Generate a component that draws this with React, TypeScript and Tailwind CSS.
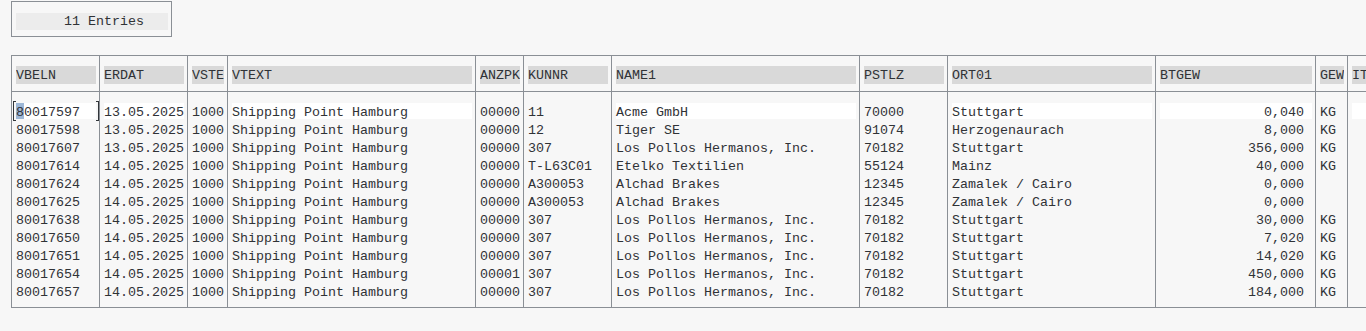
import React from "react";

type Col = { label: string; width: number; white?: boolean; right?: boolean };

const COLS: Col[] = [
  { label: "VBELN", width: 88, white: true },
  { label: "ERDAT", width: 88, white: true },
  { label: "VSTE", width: 40 },
  { label: "VTEXT", width: 248, white: true },
  { label: "ANZPK", width: 48 },
  { label: "KUNNR", width: 88 },
  { label: "NAME1", width: 248, white: true },
  { label: "PSTLZ", width: 88 },
  { label: "ORT01", width: 208, white: true },
  { label: "BTGEW", width: 160, white: true, right: true },
  { label: "GEW", width: 32 },
  { label: "IT", width: 200, white: true },
];

const LPH = "Los Pollos Hermanos, Inc.";
const SPH = "Shipping Point Hamburg";

const ROWS: string[][] = [
  ["80017597", "13.05.2025", "1000", SPH, "00000", "11", "Acme GmbH", "70000", "Stuttgart", "0,040", "KG", ""],
  ["80017598", "13.05.2025", "1000", SPH, "00000", "12", "Tiger SE", "91074", "Herzogenaurach", "8,000", "KG", ""],
  ["80017607", "13.05.2025", "1000", SPH, "00000", "307", LPH, "70182", "Stuttgart", "356,000", "KG", ""],
  ["80017614", "14.05.2025", "1000", SPH, "00000", "T-L63C01", "Etelko Textilien", "55124", "Mainz", "40,000", "KG", ""],
  ["80017624", "14.05.2025", "1000", SPH, "00000", "A300053", "Alchad Brakes", "12345", "Zamalek / Cairo", "0,000", "", ""],
  ["80017625", "14.05.2025", "1000", SPH, "00000", "A300053", "Alchad Brakes", "12345", "Zamalek / Cairo", "0,000", "", ""],
  ["80017638", "14.05.2025", "1000", SPH, "00000", "307", LPH, "70182", "Stuttgart", "30,000", "KG", ""],
  ["80017650", "14.05.2025", "1000", SPH, "00000", "307", LPH, "70182", "Stuttgart", "7,020", "KG", ""],
  ["80017651", "14.05.2025", "1000", SPH, "00000", "307", LPH, "70182", "Stuttgart", "14,020", "KG", ""],
  ["80017654", "14.05.2025", "1000", SPH, "00001", "307", LPH, "70182", "Stuttgart", "450,000", "KG", ""],
  ["80017657", "14.05.2025", "1000", SPH, "00000", "307", LPH, "70182", "Stuttgart", "184,000", "KG", ""],
];

function FirstCell({ text }: { text: string }) {
  // focused cell: bracket corners + highlighted first char
  return (
    <div className="relative h-[18px] pt-[1px]">
      <span className="absolute left-[-3px] top-[-1px] h-[20px] w-[3px] border-l border-t border-b border-[#32363a]" />
      <span className="absolute right-[0px] top-[-1px] h-[20px] w-[3px] border-r border-t border-b border-[#32363a]" />
      <div className="h-[16px] w-[80px] bg-white leading-[19px] whitespace-pre">
        <span className="bg-[#9db7d6] leading-[16px] inline-block h-[16px] align-top pt-[1.5px]">{text[0]}</span>
        {text.slice(1)}
      </div>
    </div>
  );
}

export default function App() {
  return (
    <div className="h-[331px] w-[1366px] overflow-hidden bg-[#f7f7f7] text-[13.333px] text-[#2f3236] font-['Liberation_Mono',monospace]">
      <div className="ml-[11px] mt-[1px] h-[36px] w-[161px] border border-[#8a8f95] pl-[4px] pt-[11px]">
        <div className="h-[17px] w-[152px] bg-[#ececec] pl-[48px] leading-[17px]">11 Entries</div>
      </div>

      <div className="ml-[11px] mt-[18px] flex border-l border-t border-b border-[#8a8f95] w-[1400px]">
        {COLS.map((col, ci) => (
          <div
            key={col.label}
            className="shrink-0 border-r border-[#8a8f95]"
            style={{ width: col.width }}
          >
            <div className="h-[36px] border-b border-[#8a8f95] pl-[4px] pt-[10px]">
              <div
                className="h-[18px] bg-[#d9d9d9] leading-[20px] whitespace-pre overflow-hidden"
                style={{ width: col.width - 8 }}
              >
                {col.label}
              </div>
            </div>
            <div className="pl-[4px] pt-[10px] pb-[7px]">
              {ROWS.map((row, ri) => {
                const v = row[ci];
                if (ri === 0 && ci === 0) return <FirstCell key={ri} text={v} />;
                const white = ri === 0 && col.white;
                return (
                  <div key={ri} className="h-[18px] pt-[1px]">
                    <div
                      className={`h-[16px] leading-[19px] whitespace-pre ${white ? "bg-white" : ""} ${
                        col.right ? "pr-[8px] text-right" : ""
                      }`}
                      style={{ width: col.width - 8 }}
                    >
                      {v}
                    </div>
                  </div>
                );
              })}
            </div>
          </div>
        ))}
      </div>
    </div>
  );
}
